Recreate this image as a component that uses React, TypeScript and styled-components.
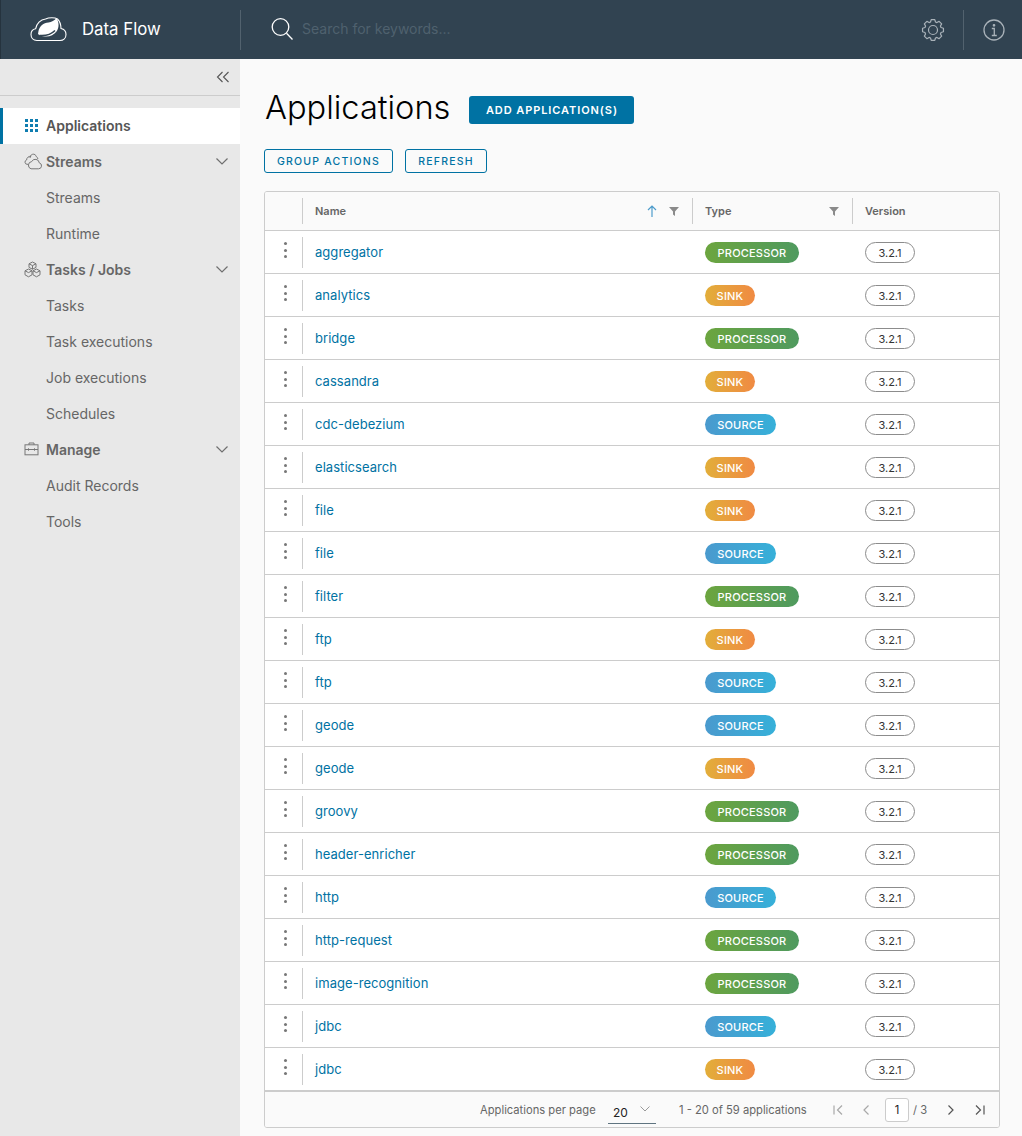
import React from "react";
import styled, { createGlobalStyle } from "styled-components";

const Global = createGlobalStyle`
  html, body { margin: 0; padding: 0; height: 100%; overflow: hidden; }
  body { font-family: Inter, "Open Sans", "Liberation Sans", sans-serif; background: #fafafa; color: #565656; }
  * { box-sizing: border-box; }
`;

const Page = styled.div`
  display: flex;
  flex-direction: column;
  height: 1136px;
  overflow: hidden;
`;
const TopBar = styled.header`
  height: 59px;
  flex: none;
  background: #314351;
  display: flex;
  align-items: center;
  border-left: 1px solid #25333e;
`;
const Brand = styled.div`
  width: 240px;
  height: 40px;
  display: flex;
  align-items: center;
  gap: 15px;
  padding: 0 0 1px 29px;
  border-right: 1px solid #52626e;
  color: #fff;
  font-size: 16.8px;
`;
const Search = styled.div`
  flex: 1;
  display: flex;
  align-items: center;
  gap: 8px;
  padding: 0 0 2px 30px;
  color: #4f616e;
  font-size: 14px;
`;
const GearAction = styled.div`
  height: 40px;
  width: 57px;
  padding-right: 4px;
  display: flex;
  align-items: center;
  justify-content: center;
`;
const InfoAction = styled.div`
  height: 40px;
  width: 59px;
  padding-left: 2px;
  display: flex;
  align-items: center;
  justify-content: center;
  border-left: 1px solid #52626e;
`;
const Body = styled.div`
  flex: 1;
  display: flex;
  min-height: 0;
`;
const Sidebar = styled.nav`
  width: 240px;
  flex: none;
  background: #e8e8e8;
`;
const Collapse = styled.div`
  height: 37px;
  display: flex;
  align-items: center;
  justify-content: flex-end;
  padding-right: 10px;
  border-bottom: 1px solid #cccccc;
  margin-bottom: 12px;
`;
const NavActive = styled.div`
  height: 36px;
  display: flex;
  align-items: center;
  background: #fff;
  border-left: 3px solid #0072a3;
  padding: 0 0 2px 22px;
  gap: 8px;
  font-size: 14px;
  font-weight: 600;
  color: #565656;
`;
const NavGroup = styled.div`
  height: 36px;
  display: flex;
  align-items: center;
  padding: 0 11px 2px 24px;
  font-size: 14px;
  font-weight: 600;
  color: #666;
`;
const NavGroupIcon = styled.span`
  width: 22px;
  height: 18px;
  display: flex;
  align-items: center;
`;
const NavGroupLabel = styled.span`
  flex: 1;
`;
const NavLink = styled.div`
  height: 36px;
  display: flex;
  align-items: center;
  padding: 0 0 2px 46px;
  font-size: 14px;
  color: #666;
`;
const Main = styled.main`
  flex: 1;
  min-width: 0;
  padding: 0 22px 0 24px;
  background: #fafafa;
`;
const TitleRow = styled.div`
  display: flex;
  align-items: center;
  gap: 19px;
  height: 54px;
  margin-top: 24px;
`;
const Title = styled.h1`
  margin: 0;
  padding: 0 0 6px 1px;
  font-size: 32.6px;
  font-weight: 300;
  color: #000;
`;
const PrimaryButton = styled.button`
  height: 28px;
  width: 165px;
  padding: 0;
  border: 0;
  border-radius: 3px;
  background: #0072a3;
  color: #fff;
  font: 600 11px Inter, sans-serif;
  letter-spacing: 0.92px;
`;
const Actions = styled.div`
  display: flex;
  gap: 12px;
  margin-top: 12px;
`;
const OutlineButton = styled.button<{ $w: number }>`
  height: 24px;
  width: ${(p) => p.$w}px;
  padding: 0;
  border: 1px solid #0072a3;
  border-radius: 3px;
  background: transparent;
  color: #0072a3;
  font: 500 10.5px Inter, sans-serif;
  letter-spacing: 1.2px;
`;
const Grid = styled.section`
  margin-top: 18px;
  width: 736px;
  height: 937px;
  border: 1px solid #ccc;
  border-radius: 3px;
  background: #fff;
  overflow: hidden;
  display: flex;
  flex-direction: column;
`;
const COLS = "38px 390px 160px 1fr";
const HeadRow = styled.div`
  display: grid;
  grid-template-columns: ${COLS};
  height: 39px;
  flex: none;
  background: #fafafa;
  border-bottom: 1px solid #ccc;
  font-size: 11px;
  font-weight: 600;
  color: #666;
`;
const HeadCell = styled.div<{ $divider?: boolean }>`
  position: relative;
  display: flex;
  align-items: center;
  padding: 0 14px 0 12px;
  gap: 12px;
  &::after {
    content: "";
    display: ${(p) => (p.$divider ? "block" : "none")};
    position: absolute;
    right: 0;
    top: 6px;
    bottom: 6px;
    width: 1px;
    background: #ccc;
  }
`;
const HeadLabel = styled.span`
  flex: 1;
`;
const Row = styled.div`
  display: grid;
  grid-template-columns: ${COLS};
  height: 43px;
  flex: none;
  border-bottom: 1px solid #ccc;
  font-size: 13px;
`;
const MenuCell = styled.div`
  position: relative;
  display: flex;
  justify-content: center;
  padding: 11px 0 0 2px;
  &::after {
    content: "";
    position: absolute;
    right: 0;
    top: 6px;
    bottom: 5px;
    width: 1px;
    background: #ccc;
  }
`;
const Dots = styled.span`
  display: flex;
  flex-direction: column;
  gap: 3.5px;
  & > i {
    display: block;
    width: 3px;
    height: 3px;
    border-radius: 50%;
    background: #777;
  }
`;
const NameCell = styled.div`
  display: flex;
  align-items: center;
  padding-left: 12px;
  color: #0072a3;
  letter-spacing: 0.05px;
`;
const BadgeCell = styled.div`
  display: flex;
  align-items: center;
  padding: 1px 0 0 12px;
`;
const gradients: Record<string, string> = {
  PROCESSOR: "linear-gradient(90deg, #6ca53f, #4f9a5f)",
  SINK: "linear-gradient(90deg, #e2ae3a, #f08a43)",
  SOURCE: "linear-gradient(90deg, #4a9ace, #36b0d9)",
};
const widths: Record<string, number> = { PROCESSOR: 94, SINK: 50, SOURCE: 71 };
const TypeBadge = styled.span<{ $t: string }>`
  width: ${(p) => widths[p.$t]}px;
  height: 21px;
  border-radius: 11px;
  background: ${(p) => gradients[p.$t]};
  color: #fff;
  font-size: 11px;
  font-weight: 500;
  letter-spacing: 0.2px;
  display: flex;
  align-items: center;
  justify-content: center;
`;
const VersionBadge = styled.span`
  width: 50px;
  height: 21px;
  border-radius: 11px;
  border: 1px solid #8c8c8c;
  background: #fff;
  color: #333;
  font-size: 11px;
  display: flex;
  align-items: center;
  justify-content: center;
`;
const Footer = styled.div`
  flex: 1;
  margin-top: -1px;
  border-top: 2px solid #ccc;
  background: #fafafa;
  display: flex;
  align-items: center;
  padding-left: 215px;
  font-size: 11.2px;
  color: #666;
  white-space: nowrap;
`;
const PerPageLabel = styled.span`
  width: 115px;
  flex: none;
`;
const PerPage = styled.div`
  width: 48px;
  height: 24px;
  flex: none;
  margin-left: 13px;
  padding: 2px 5px 0 5px;
  border-bottom: 1px solid #5f7480;
  display: flex;
  align-items: center;
  justify-content: space-between;
  color: #222;
  font-size: 12px;
  position: relative;
  top: 2px;
`;
const PerPageChevron = styled.span`
  display: flex;
  margin-top: -6px;
`;
const RangeText = styled.span`
  margin-left: 23px;
  width: 145px;
  flex: none;
`;
const Pager = styled.div`
  display: flex;
  align-items: center;
`;
const PagerIcon = styled.span<{ $w: number }>`
  width: ${(p) => p.$w}px;
  flex: none;
  display: flex;
  justify-content: center;
`;
const PageInput = styled.span`
  width: 24px;
  height: 24px;
  flex: none;
  border: 1px solid #ccc;
  border-radius: 3px;
  background: #fff;
  color: #222;
  display: flex;
  align-items: center;
  justify-content: center;
  margin: 0 4px 0 5px;
`;
const PageTotal = styled.span`
  width: 16px;
  flex: none;
`;

const Chevron = () => (
  <svg width="14" height="10" viewBox="0 0 14 10" fill="none" stroke="#6f6f6f" strokeWidth="1.2">
    <path d="M1.5 2.5 7 8l5.5-5.5" />
  </svg>
);
const Filter = () => (
  <svg width="10" height="10" viewBox="0 0 10 10" fill="#8a8a8a">
    <path d="M0 1h10L6 5.4V10L4 8.6V5.4z" />
  </svg>
);
const Logo = () => (
  <svg width="37" height="26" viewBox="0 0 37 26" fill="none">
    <path d="M7 24.5C3 24.5 1 21.5 1 18.5c0-3.3 2.2-5.3 4.6-5.7C6.5 7.5 10.5 3.5 15.5 3c3.5-1.5 9-1.7 12 0 2.5 2.5 3.5 7 3.5 9.5 3 .6 5 3 5 6 0 3.5-2.5 6-6 6z" stroke="#fff" strokeWidth="1.1" />
    <path d="M8.5 15c1-5 5-8 10-8.5 3-.4 6-2 8-4.5 2.5 4 3 9.5 0 13.5-2.5 3.5-7 5.500-12 5-2.500-.2-5-1-6.500-2.500 .2-1 .3-2 .5-3z" fill="#fff" />
    <path d="M9.5 19.5c5 .5 11-.5 15.5-5" stroke="#314351" strokeWidth="1.6" />
  </svg>
);
const SearchIcon = () => (
  <svg width="23" height="24" viewBox="0 0 23 24" fill="none" stroke="#fff" strokeWidth="1.3">
    <circle cx="9.5" cy="10" r="8.3" />
    <path d="M15.5 16.2 21.5 22.5" />
  </svg>
);

const gearPath = (() => {
  const teeth = 8;
  const pts: string[] = [];
  for (let i = 0; i < teeth; i++) {
    const c = (i * 2 * Math.PI) / teeth - Math.PI / 2;
    const spec: [number, number][] = [
      [8.4, -0.3],
      [10.6, -0.17],
      [10.6, 0.17],
      [8.4, 0.3],
    ];
    spec.forEach(([r, a]) => {
      pts.push(`${(12 + r * Math.cos(c + a)).toFixed(2)} ${(12 + r * Math.sin(c + a)).toFixed(2)}`);
    });
  }
  return `M${pts.join("L")}Z`;
})();
const Gear = () => (
  <svg width="24" height="24" viewBox="0 0 24 24" fill="none" stroke="#a9b2b9" strokeWidth="1.2" strokeLinejoin="round">
    <path d={gearPath} />
    <circle cx="12" cy="12" r="4.5" />
  </svg>
);
const Info = () => (
  <svg width="22" height="22" viewBox="0 0 22 22" fill="none" stroke="#a9b2b9" strokeWidth="1.3">
    <circle cx="11" cy="11" r="10" />
    <path d="M8.8 9.5H11.3V16.5M8.8 16.5h5" />
    <circle cx="11" cy="6.3" r=".7" fill="#a9b2b9" />
  </svg>
);
const DoubleLeft = () => (
  <svg width="14" height="12" viewBox="0 0 14 12" fill="none" stroke="#555" strokeWidth="1.1">
    <path d="M6.5 1 1.5 6l5 5M12.5 1l-5 5 5 5" />
  </svg>
);
const GridIcon = () => (
  <svg width="13" height="13" viewBox="0 0 13 13" fill="#0f7db0">
    {[0, 5, 10].flatMap((y) => [0, 5, 10].map((x) => <rect key={`${x}-${y}`} x={x} y={y} width="3" height="3" />))}
  </svg>
);
const Clouds = () => (
  <svg width="18" height="17" viewBox="0 0 18 17" fill="none" stroke="#777" strokeWidth="1">
    <path d="M7 15.8h7.5a3 3 0 0 0 .8-5.9 4 4 0 0 0-7.6-1.3A3.7 3.7 0 0 0 7 15.8z" />
    <path d="M4.2 11.3H3a2.2 2.2 0 0 1-.4-4.300 3.600 3.600 0 0 1 4.500-3.500M6 5a3.500 3.500 0 0 1 2.500-3.700 3 3 0 0 1 3.800 2.400 2.600 2.600 0 0 1 1.600 2.300" />
  </svg>
);
const Cubes = () => (
  <svg width="17" height="17" viewBox="0 0 17 17" fill="none" stroke="#777" strokeWidth="1">
    <path d="M8.5 1 12 2.8v3.6L8.5 8.2 5 6.4V2.8zM5 2.8l3.500 1.800L12 2.800M8.500 4.600v3.600" />
    <path d="M4.5 8 8 9.8v4L4.5 15.8 1 13.8v-4zM1 9.8l3.500 1.800L8 9.800" />
    <path d="M12.5 8 16 9.8v4l-3.500 2L9 13.800v-4zM9 9.800l3.500 1.800 3.500-1.800" />
  </svg>
);
const Briefcase = () => (
  <svg width="15" height="14" viewBox="0 0 15 14" fill="none" stroke="#777" strokeWidth="1">
    <rect x="1" y="2.8" width="13" height="10" />
    <path d="M5 2.8V1h5v1.800M1 7.500h3.500M10.500 7.500H14M4.500 6.300v2.400M10.500 6.300v2.400M4.500 7.500h6" />
  </svg>
);
const ArrowUp = () => (
  <svg width="10" height="12" viewBox="0 0 10 12" fill="none" stroke="#4e9ccb" strokeWidth="1.2">
    <path d="M5 12V1M1 5l4-4 4 4" />
  </svg>
);
const PageArrow = ({ d, stroke }: { d: string; stroke: string }) => (
  <svg width="12" height="12" viewBox="0 0 12 12" fill="none" stroke={stroke} strokeWidth="1.2">
    <path d={d} />
  </svg>
);

const rows: [string, string][] = [
  ["aggregator", "PROCESSOR"], ["analytics", "SINK"], ["bridge", "PROCESSOR"], ["cassandra", "SINK"],
  ["cdc-debezium", "SOURCE"], ["elasticsearch", "SINK"], ["file", "SINK"], ["file", "SOURCE"],
  ["filter", "PROCESSOR"], ["ftp", "SINK"], ["ftp", "SOURCE"], ["geode", "SOURCE"], ["geode", "SINK"],
  ["groovy", "PROCESSOR"], ["header-enricher", "PROCESSOR"], ["http", "SOURCE"], ["http-request", "PROCESSOR"],
  ["image-recognition", "PROCESSOR"], ["jdbc", "SOURCE"], ["jdbc", "SINK"],
];

export default function App() {
  return (
    <Page>
      <Global />
      <TopBar>
        <Brand>
          <Logo />
          <span>Data Flow</span>
        </Brand>
        <Search>
          <SearchIcon />
          <span>Search for keywords...</span>
        </Search>
        <GearAction><Gear /></GearAction>
        <InfoAction><Info /></InfoAction>
      </TopBar>
      <Body>
        <Sidebar>
          <Collapse><DoubleLeft /></Collapse>
          <NavActive><GridIcon /><span>Applications</span></NavActive>
          <NavGroup><NavGroupIcon><Clouds /></NavGroupIcon><NavGroupLabel>Streams</NavGroupLabel><Chevron /></NavGroup>
          <NavLink>Streams</NavLink>
          <NavLink>Runtime</NavLink>
          <NavGroup><NavGroupIcon><Cubes /></NavGroupIcon><NavGroupLabel>Tasks / Jobs</NavGroupLabel><Chevron /></NavGroup>
          <NavLink>Tasks</NavLink>
          <NavLink>Task executions</NavLink>
          <NavLink>Job executions</NavLink>
          <NavLink>Schedules</NavLink>
          <NavGroup><NavGroupIcon><Briefcase /></NavGroupIcon><NavGroupLabel>Manage</NavGroupLabel><Chevron /></NavGroup>
          <NavLink>Audit Records</NavLink>
          <NavLink>Tools</NavLink>
        </Sidebar>
        <Main>
          <TitleRow>
            <Title>Applications</Title>
            <PrimaryButton>ADD APPLICATION(S)</PrimaryButton>
          </TitleRow>
          <Actions>
            <OutlineButton $w={129}>GROUP ACTIONS</OutlineButton>
            <OutlineButton $w={82}>REFRESH</OutlineButton>
          </Actions>
          <Grid>
            <HeadRow>
              <HeadCell $divider />
              <HeadCell $divider>
                <HeadLabel>Name</HeadLabel>
                <ArrowUp />
                <Filter />
              </HeadCell>
              <HeadCell $divider>
                <HeadLabel>Type</HeadLabel>
                <Filter />
              </HeadCell>
              <HeadCell><HeadLabel>Version</HeadLabel></HeadCell>
            </HeadRow>
            {rows.map(([name, type], i) => (
              <Row key={i}>
                <MenuCell><Dots><i /><i /><i /></Dots></MenuCell>
                <NameCell>{name}</NameCell>
                <BadgeCell><TypeBadge $t={type}>{type}</TypeBadge></BadgeCell>
                <BadgeCell><VersionBadge>3.2.1</VersionBadge></BadgeCell>
              </Row>
            ))}
            <Footer>
              <PerPageLabel>Applications per page</PerPageLabel>
              <PerPage>
                <span>20</span>
                <PerPageChevron>
                  <svg width="12" height="8" viewBox="0 0 12 8" fill="none" stroke="#9a9a9a" strokeWidth="1"><path d="M1.5 1.5 6 6l4.5-4.5" /></svg>
                </PerPageChevron>
              </PerPage>
              <RangeText>1 - 20 of 59 applications</RangeText>
              <Pager>
                <PagerIcon $w={28}><PageArrow d="M2 1.5v9M10 1.5 5.5 6l4.5 4.5" stroke="#a8a8a8" /></PagerIcon>
                <PagerIcon $w={28}><PageArrow d="M8.5 1.5 4 6l4.5 4.5" stroke="#a8a8a8" /></PagerIcon>
                <PageInput>1</PageInput>
                <PageTotal>/ 3</PageTotal>
                <PagerIcon $w={44}><PageArrow d="M3.5 1.5 8 6l-4.5 4.5" stroke="#555" /></PagerIcon>
                <PagerIcon $w={14}><PageArrow d="M10 1.5v9M2 1.5 6.5 6 2 10.5" stroke="#555" /></PagerIcon>
              </Pager>
            </Footer>
          </Grid>
        </Main>
      </Body>
    </Page>
  );
}
